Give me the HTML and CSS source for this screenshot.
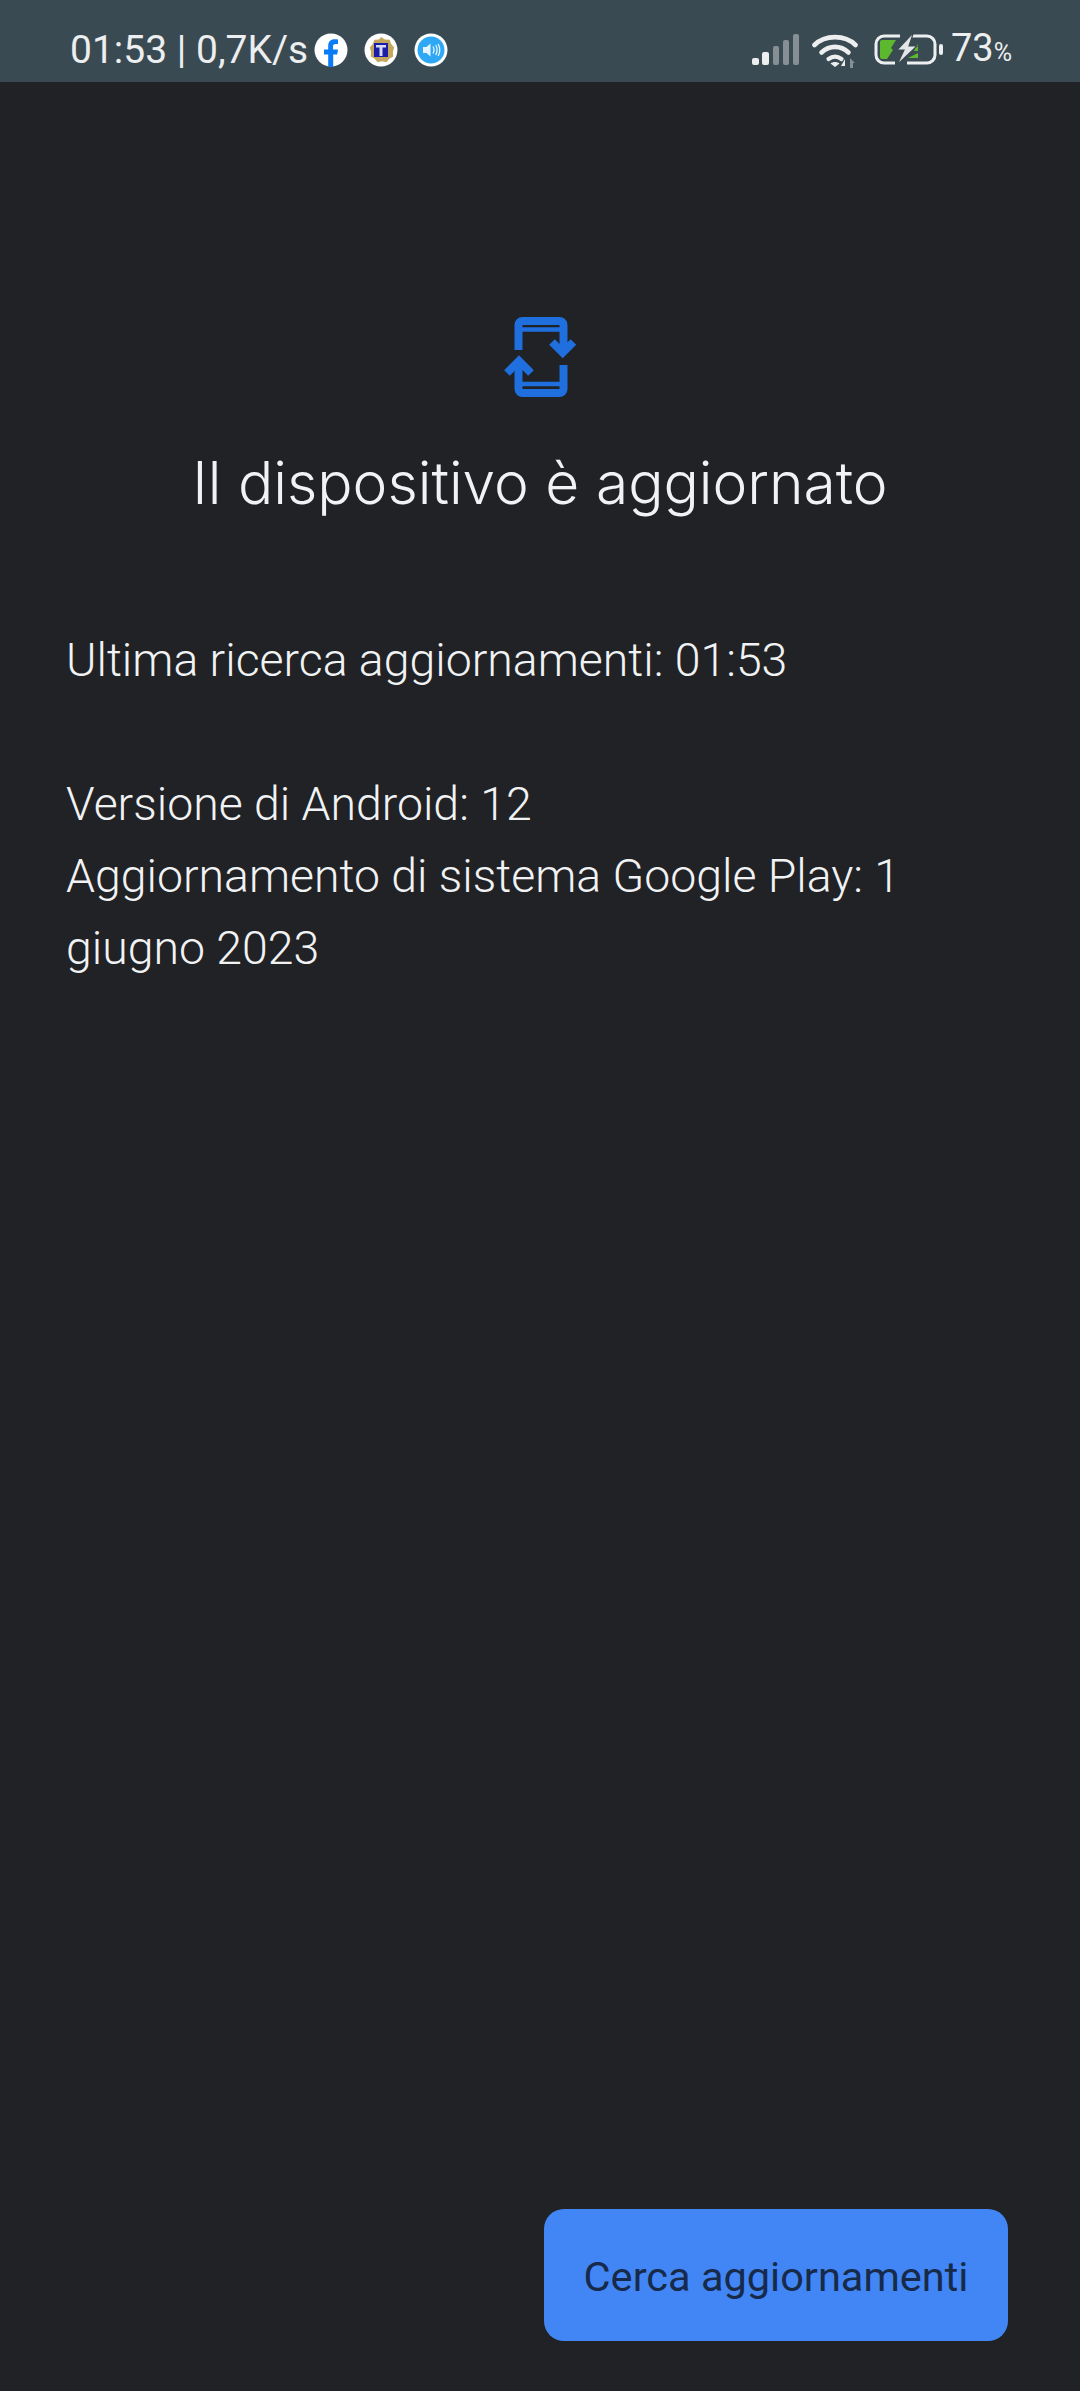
FILE: index.html
```html
<!DOCTYPE html>
<html lang="it">
<head>
<meta charset="utf-8">
<title>Aggiornamento di sistema</title>
<link rel="stylesheet" href="styles.css">
</head>
<body>
<div class="screen">
  <header class="statusbar">
    <div class="status-left">
      <span class="status-text">01:53 | 0,7K/s</span>
      <div class="notif-icons">
        <svg class="notif" viewBox="0 0 34 34"><circle cx="17" cy="17" r="16.500" fill="#fff"/><path d="M14.200 34V21.500H10v-5h4.200v-3.600c0-4.300 2.500-6.700 6.400-6.700 1.500 0 2.900.2 3.400.3v4.400h-2.400c-2 0-2.600 1.200-2.600 2.500v3.100H24l-.8 5h-4V34z" fill="#0a7cf5"/></svg>
        <svg class="notif" viewBox="0 0 34 34"><circle cx="17" cy="17" r="16.500" fill="#fff"/><path d="M17 4l4 2.400 4.600.4 1.600 4.200 3 3.500-1.400 4.400.4 4.600-4 2.200-2.800 3.600-4.400-1-4.400 1-2.800-3.600-4-2.200.4-4.600-1.400-4.400 3-3.500 1.600-4.200 4.600-.4z" fill="#c3a75c"/><rect x="10" y="10" width="14" height="14" fill="#1a1fa8"/><path d="M12 12h10v2.500h-3.500V23h-3v-8.500H12z" fill="#d8d8f0"/></svg>
        <svg class="notif" viewBox="0 0 34 34"><circle cx="17" cy="17" r="16.500" fill="#fff"/><circle cx="17" cy="17" r="13.500" fill="#2ea8f5"/><path d="M9 14h3.500l4-3.500v13l-4-3.500H9z" fill="#e8f4fd"/><path d="M19 13.500c1.300 2.200 1.300 4.800 0 7M21.700 12c1.800 3.200 1.800 6.800 0 10M24.200 11c2 3.800 2 8.200 0 12" fill="none" stroke="#e8f4fd" stroke-width="1.300"/></svg>
      </div>
    </div>
    <div class="status-right">
      <svg class="signal" viewBox="0 0 48 32"><rect x="0" y="24" width="7" height="7" rx="2" fill="#eceeef"/><rect x="10" y="18" width="7" height="13" rx="2" fill="#eceeef"/><rect x="21" y="12" width="6" height="19" rx="2" fill="#868f94"/><rect x="31" y="6" width="6" height="25" rx="2" fill="#868f94"/><rect x="41" y="0" width="6" height="31" rx="2" fill="#868f94"/></svg>
      <svg class="wifi" viewBox="0 0 46 35"><path d="M2.500 12C13 1.500 33 1.500 43.500 12" fill="none" stroke="#eceeef" stroke-width="4.600" stroke-linecap="round"/><path d="M9.500 19.500c8-7.500 19-7.500 27 0" fill="none" stroke="#eceeef" stroke-width="4.600" stroke-linecap="round"/><path d="M16.500 26c4-3 9-3 13 0" fill="none" stroke="#eceeef" stroke-width="4.200" stroke-linecap="round"/><path d="M18.500 30.500c2.500-2 6.500-2 9 0l-4.500 3.500z" fill="#eceeef"/><path d="M33 26v7h-4z" fill="#eceeef"/><path d="M38 35v-10l5 5h-2v5z" fill="#868f94"/></svg>
      <svg class="battery" viewBox="0 0 70 32"><path d="M26 2H10a8 8 0 0 0-8 8v11a8 8 0 0 0 8 8h11M33 29h20a8 8 0 0 0 8-8V10a8 8 0 0 0-8-8H38" fill="none" stroke="#eceeef" stroke-width="3"/><rect x="65" y="10" width="4" height="11" rx="2" fill="#eceeef"/><path d="M8 6h14l-5 8 2 2-6 9H8a2 2 0 0 1-2-2V8a2 2 0 0 1 2-2z" fill="#5cb82c"/><path d="M44 10v7h-4l2-5z M34 24l10-5v5z" fill="#5cb82c"/><path d="M38 0L23 16h7l-7 15 20-19h-8l4-12z" fill="#e4e6e7" stroke="#3a4a52" stroke-width="1.200"/></svg>
      <span class="battery-text">73<span class="percent">%</span></span>
    </div>
  </header>
  <main class="content">
    <svg class="update-icon" viewBox="0 0 73 80" aria-hidden="true"><path d="M14.500 33V8a4 4 0 0 1 4-4h37a4 4 0 0 1 4 4v22" fill="none" stroke="#1f6fdf" stroke-width="8"/><path d="M14.500 12.500h45M14.500 67h45" fill="none" stroke="#1f6fdf" stroke-width="4.500"/><path d="M14.500 44v28a4 4 0 0 0 4 4h37a4 4 0 0 0 4-4V48" fill="none" stroke="#1f6fdf" stroke-width="8"/><path d="M48 25l10.700 10.700L69.400 25" fill="none" stroke="#1f6fdf" stroke-width="8"/><path d="M3 56l12-12 12 12" fill="none" stroke="#1f6fdf" stroke-width="8"/></svg>
    <h1 class="title">Il dispositivo è aggiornato</h1>
    <p class="last-check">Ultima ricerca aggiornamenti: 01:53</p>
    <p class="details">Versione di Android: 12<br>Aggiornamento di sistema Google Play: 1<br>giugno 2023</p>
  </main>
  <footer class="actions">
    <button class="primary" type="button">Cerca aggiornamenti</button>
  </footer>
</div>
</body>
</html>
```
FILE: styles.css
```css
html, body {
  margin: 0;
  padding: 0;
  background: #202226;
}
.screen {
  width: 1080px;
  height: 2391px;
  display: flex;
  flex-direction: column;
  background: #202226;
  color: #f1f2f3;
  font-family: "Roboto", "Noto Sans", sans-serif;
  overflow: hidden;
}
.statusbar {
  height: 82px;
  flex: none;
  background: #3a4a52;
  display: flex;
  justify-content: space-between;
  align-items: center;
  padding: 0 68px 0 70px;
  box-sizing: border-box;
  color: #eceeef;
}
.status-left, .status-right, .notif-icons {
  display: flex;
  align-items: center;
}
.status-left { padding-top: 18px; }
.status-right { padding-top: 18px; }
.status-text {
  font-family: "Roboto", sans-serif;
  font-size: 39px;
  line-height: 40px;
  white-space: nowrap;
}
.notif-icons { gap: 16px; margin-left: 6px; }
.notif { width: 34px; height: 34px; display: block; }
.signal { width: 48px; height: 32px; display: block; }
.wifi { width: 46px; height: 35px; margin-left: 12px; display: block; }
.battery { width: 70px; height: 32px; margin-left: 16px; display: block; }
.battery-text {
  font-family: "Roboto", sans-serif;
  font-size: 38px;
  line-height: 40px;
  margin-left: 7px;
}
.percent { font-size: 25px; }
.content {
  flex: 1;
  display: flex;
  flex-direction: column;
  padding: 235px 66px 0;
}
.update-icon {
  width: 73px;
  height: 80px;
  align-self: center;
}
.title {
  margin: 44px 0 0;
  font-family: "Inter", sans-serif;
  font-weight: 300;
  font-size: 58.7px;
  line-height: 84px;
  text-align: center;
  color: #f1f2f3;
}
.last-check, .details {
  margin: 0;
  font-family: "Roboto", sans-serif;
  font-weight: 300;
  font-size: 46.4px;
  line-height: 72px;
}
.last-check { margin-top: 99px; }
.details { margin-top: 72px; }
.actions {
  flex: none;
  display: flex;
  justify-content: flex-end;
  padding: 0 72px 50px 0;
}
.primary {
  width: 464px;
  height: 132px;
  border: none;
  border-radius: 20px;
  background: #4285f4;
  color: #172a4a;
  font-family: "Roboto", sans-serif;
  font-size: 41.5px;
  padding: 2px 0 0;
}
```
